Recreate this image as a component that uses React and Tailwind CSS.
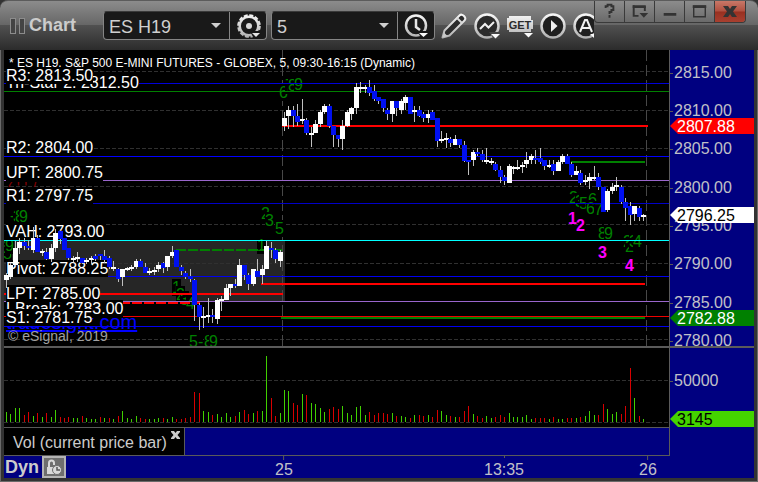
import { useState } from "react";

const PLOT_WIDTH = 665;
const FIRST_BAR = 280;
const BAR_STEP = 4.49;
const OLDEST = -62;

// high, body top, body bottom, low, 1 = up bar (oldest first)
const candles = [
    [223, 225, 230, 238, 1], [213, 215, 227, 229, 1], [191, 198, 215, 217, 1], [188, 192, 198, 204, 1], [188, 192, 196, 200, 0],
    [190, 196, 198, 200, 0], [177, 188, 200, 203, 1], [185, 188, 202, 202, 0], [199, 201, 203, 206, 1], [198, 202, 209, 210, 0],
    [194, 198, 209, 212, 1], [179, 183, 198, 202, 1], [179, 181, 189, 194, 0], [188, 188, 200, 200, 0], [198, 198, 208, 210, 0],
    [206, 208, 210, 212, 1], [202, 207, 209, 212, 1], [208, 208, 213, 214, 0], [208, 210, 212, 214, 1], [206, 208, 210, 214, 1],
    [204, 206, 209, 211, 0], [204, 204, 206, 210, 0], [200, 206, 210, 213, 0], [206, 208, 217, 219, 0], [211, 217, 219, 221, 1],
    [218, 219, 229, 232, 0], [219, 219, 227, 236, 1], [217, 218, 220, 221, 1], [215, 217, 219, 221, 1], [209, 211, 217, 219, 1],
    [209, 211, 217, 217, 0], [213, 217, 223, 223, 0], [218, 221, 223, 225, 1], [217, 220, 222, 225, 1], [212, 215, 219, 222, 1],
    [212, 213, 218, 223, 0], [206, 206, 217, 221, 1], [196, 202, 206, 208, 1], [200, 200, 217, 217, 0], [215, 217, 221, 225, 0],
    [221, 223, 227, 229, 0], [219, 226, 229, 232, 0], [229, 230, 255, 271, 0], [253, 255, 267, 280, 0], [257, 266, 268, 278, 1],
    [248, 265, 267, 273, 1], [259, 265, 267, 273, 0], [248, 250, 269, 274, 1], [246, 249, 251, 261, 1], [234, 238, 250, 250, 1],
    [234, 234, 238, 246, 1], [229, 234, 236, 238, 0], [209, 215, 236, 236, 1], [215, 215, 225, 230, 0], [223, 225, 234, 240, 0],
    [219, 219, 234, 236, 1], [209, 221, 227, 227, 0], [215, 219, 225, 234, 1], [191, 196, 219, 219, 1], [192, 198, 200, 208, 0],
    [198, 200, 209, 213, 0], [200, 202, 211, 217, 1],
    [62, 68, 76, 81, 1], [56, 60, 66, 79, 1], [56, 60, 66, 77, 0], [54, 66, 72, 76, 0], [49, 69, 71, 74, 1],
    [68, 70, 83, 85, 0], [77, 83, 85, 97, 1], [70, 74, 83, 83, 1], [60, 62, 74, 77, 1], [54, 56, 62, 64, 1],
    [54, 56, 76, 78, 0], [76, 76, 85, 97, 0], [85, 85, 89, 97, 0], [70, 76, 89, 100, 1], [60, 62, 76, 77, 1],
    [57, 58, 64, 70, 1], [33, 37, 58, 64, 1], [32, 37, 39, 43, 1], [35, 37, 39, 43, 1], [30, 37, 43, 46, 0],
    [35, 41, 49, 51, 0], [47, 47, 51, 54, 0], [49, 49, 58, 62, 0], [58, 60, 64, 70, 0], [51, 51, 64, 72, 1],
    [51, 51, 58, 66, 0], [49, 51, 60, 64, 1], [45, 47, 53, 60, 1], [47, 47, 64, 64, 0], [56, 60, 62, 72, 1],
    [56, 60, 66, 67, 0], [62, 64, 68, 72, 0], [60, 64, 68, 73, 1], [60, 62, 70, 70, 0], [68, 68, 91, 97, 0],
    [81, 89, 91, 93, 1], [83, 88, 90, 98, 1], [87, 89, 93, 97, 0], [85, 89, 95, 95, 1], [89, 89, 95, 98, 0],
    [91, 95, 111, 112, 0], [110, 110, 112, 125, 0], [100, 102, 110, 116, 1], [98, 102, 104, 106, 0], [100, 104, 110, 112, 0],
    [98, 110, 112, 114, 1], [108, 111, 113, 115, 1], [112, 114, 120, 121, 0], [116, 120, 127, 133, 0], [125, 127, 131, 135, 0],
    [114, 116, 133, 133, 1], [116, 117, 119, 124, 1], [110, 117, 119, 120, 1], [112, 115, 117, 123, 1], [102, 110, 114, 118, 1],
    [104, 106, 110, 114, 1], [100, 108, 110, 114, 0], [98, 108, 112, 114, 0], [110, 110, 116, 120, 0], [110, 115, 117, 118, 1],
    [110, 114, 121, 125, 0], [110, 112, 121, 121, 1], [104, 106, 112, 114, 1], [104, 106, 114, 114, 0], [112, 114, 125, 127, 0],
    [116, 121, 125, 125, 1], [120, 123, 133, 135, 0], [125, 130, 132, 135, 1], [123, 127, 131, 139, 1], [116, 127, 129, 130, 1],
    [123, 127, 137, 140, 0], [137, 137, 162, 162, 0], [139, 141, 160, 162, 1], [133, 137, 141, 144, 1], [127, 135, 137, 141, 1],
    [135, 137, 152, 154, 0], [148, 152, 158, 171, 0], [152, 156, 165, 175, 0], [156, 156, 164, 171, 1], [156, 158, 167, 171, 0],
    [164, 165, 167, 171, 1],
];

// bar heights, negative = down bar
const volumes = [
    10, 8, 14, 14, -7, -10, 6, -9, 5, -9, 5, 12, -5, -4, -5, 4, 4, -6, 4, 3, 3, -5, 4, -4, 3, -6, 11, 4, 3, 6, -4,
    -3, 3, 3, 4, -4, 3, 5, -3, -3, -4, -5, -30, -29, 11, 10, -7, 8, 5, 9, 5, -6, 10, -12, -8, 9, -11, 11, 66, -24, -6, 9,
    32, 31, -19, -17, 28, -27, 19, 18, 14, 10, -13, -15, -13, 16, 9, 7, 15, 16, 7, -10, -7, -9, -9, -8, 9, -6, 6, 5, -4,
    7, -7, -6, 7, -5, -12, 11, 7, -6, 5, -5, -11, -16, 8, -6, -4, 6, 4, -5, -7, -5, 9, 5, 5, 5, 7, 3, -4, -4, -4, 3, -5,
    3, 3, -4, -4, 4, -5, 6, 11, 7, -7, -18, 13, 8, 10, -8, -16, -54, 24, -6, 3,
];

const gridRows = [21, 60, 98, 136, 174, 213, 251, 289];

// y, colour
const levels = [
    [33, "#0000d8"], [41, "#008000"], [106, "#0000ff"], [130, "#9a66cc"], [153, "#0000c8"], [190, "#00ffff"],
    [226, "#0000f0"], [251, "#9a66cc"], [266, "#f00000"], [276, "#0000f0"],
];

// x1, x2, y, colour, dash
const segments = [
    [0, 279, 243, "#ff0000"], [8, 196, 252, "#ff0000", "10 2"], [172, 278, 199, "#008000", "10 2"],
    [257, 641, 233, "#ff0000"], [277, 641, 267, "#008000"], [278, 644, 75, "#ff0000"], [567, 641, 111, "#008000"],
];

// name, top; later ones cover earlier ones
const levelLabels = [
    ["Tri-Star 2: 2812.50", 24], ["R3: 2813.50", 17], ["R2: 2804.00", 89], ["UPT: 2800.75", 114], ["R1: 2797.75", 137],
    ["VAH: 2793.00", 173], ["Pivot: 2788.25", 210], ["LBreak: 2783.00", 250], ["LPT: 2785.00", 235], ["S1: 2781.75", 259],
];

// digit, x, top
const counts = [
    ["-", 6, 157], ["3", 9, 158], ["8", 11, 158], ["9", 15, 158], ["8", -1, 195], ["6", -3, 189], ["9", 1, 187],
    ["1", 168, 229], ["2", 172, 236], ["3", 176, 241], ["4", 182, 245], ["1", 253, 187],
    ["2", 257, 155], ["3", 261, 162], ["5", 271, 170],
    ["5", 185, 283], ["-", 194, 283], ["8", 200, 283], ["9", 205, 283],
    ["6", 275, 34], ["7", 281, 27], ["8", 284, 27], ["9", 290, 26],
    ["2", 565, 139], ["3", 571, 143], ["5", 575, 145], ["6", 584, 141], ["6", 582, 150], ["7", 590, 151],
    ["8", 594, 175], ["9", 600, 175], ["2", 619, 183], ["2", 621, 188], ["3", 625, 183], ["4", 629, 183],
];

const signals = [["1", 564, 160], ["2", 572, 167], ["3", 594, 194], ["4", 621, 207]];

const axisPrices = [
    ["2815.00", 22], ["2810.00", 60], ["2805.00", 98], ["2800.00", 137], ["2795.00", 175],
    ["2790.00", 213], ["2785.00", 252], ["2780.00", 290],
];

const barX = (i) => Math.round(FIRST_BAR + (i + OLDEST) * BAR_STEP);
const pct = (x) => `${(x / PLOT_WIDTH) * 100}%`;

function Icon({ children, size = 26 }) {
    return (
        <svg width={size} height={size} viewBox="0 0 26 26" fill="none" aria-hidden="true" className="shrink-0">
            <defs>
                <linearGradient id="metal" x1="0" y1="0" x2="0" y2="26" gradientUnits="userSpaceOnUse">
                    <stop offset="0" stopColor="#fafafa" />
                    <stop offset="1" stopColor="#adadad" />
                </linearGradient>
            </defs>
            {children}
        </svg>
    );
}

function ToolButton({ label, children }) {
    return (
        <button type="button" aria-label={label} className="w-[26px] shrink-0">
            <Icon>{children}</Icon>
        </button>
    );
}

function Combo({ label, value, options, onChange, children }) {
    return (
        <div className="flex h-[29px] shrink-0 rounded border border-[#858585] border-t-[#3a3a3a] bg-[#191919]">
            <div className="relative w-[126px] border-r border-[#858585]">
                <select
                    aria-label={label}
                    value={value}
                    onChange={(e) => onChange(e.target.value)}
                    className="h-full w-full appearance-none bg-transparent pt-0.5 pl-[5px] text-[18px] text-[#cfcfcf] outline-none"
                >
                    {options.map((o) => <option key={o}>{o}</option>)}
                </select>
                <svg width="10" height="5" className="pointer-events-none absolute top-[11px] right-2" aria-hidden="true">
                    <path d="M0 0h10L5 5z" fill="#cfcfcf" />
                </svg>
            </div>
            <button type="button" aria-label={`${label} settings`} className="flex w-[36px] items-center justify-center">
                <Icon>{children}</Icon>
            </button>
        </div>
    );
}

function TitleBar() {
    const [symbol, setSymbol] = useState("ES H19");
    const [interval, setInterval] = useState("5");

    return (
        <header className="flex h-[50px] rounded-t-lg border-t border-[#5c5c5c] bg-[linear-gradient(#8c8c8c_0%,#666666_49%,#505050_50%,#2b2b2b_100%)]">
            <div className="flex min-w-0 flex-1 items-center overflow-hidden pl-2.5">
                {/* Drag grip */}
                <div className="flex shrink-0 gap-[3px]">
                    <span className="h-4 w-1.5 border border-[#8c8c8c] bg-[#444444]" />
                    <span className="h-4 w-1.5 border border-[#8c8c8c] bg-[#444444]" />
                </div>
                <h1 className="w-[78px] shrink-0 pl-1 text-[18px] font-bold text-[#cccccc]">Chart</h1>

                <div className="flex shrink-0 gap-1">
                    <Combo label="Symbol" value={symbol} options={["ES H19", "NQ H19"]} onChange={setSymbol}>
                        <circle cx="14" cy="13" r="9.300" stroke="url(#metal)" strokeWidth="2.500" />
                        <circle cx="14" cy="13" r="10.800" stroke="url(#metal)" strokeWidth="2" strokeDasharray="4 1.650" />
                        <circle cx="14" cy="13" r="3" fill="#d8d8d8" />
                        <path d="M15 18h11v2l-5 6h-2z" fill="#191919" />
                        <path d="M17 20h8l-4 4z" fill="#e6e6e6" />
                    </Combo>
                    <Combo label="Interval" value={interval} options={["5", "15", "60"]} onChange={setInterval}>
                        <circle cx="13" cy="12.500" r="10" stroke="url(#metal)" strokeWidth="2.500" />
                        <path d="M13 6v8l4 3" stroke="#e6e6e6" strokeWidth="2.500" />
                        <path d="M14 18h12v2l-5 6h-2z" fill="#191919" />
                        <path d="M16 20h9l-4.500 4z" fill="#fafafa" />
                    </Combo>
                </div>

                <div className="flex shrink-0 gap-[7px] pl-1.5">
                    <ToolButton label="Draw">
                        <path d="M1.500 24.500l2-7L18.500 2.500q2-2 4.500 .5t.5 4.500L8.500 22.500z" fill="#2b2b2b" stroke="url(#metal)" strokeWidth="2" strokeLinejoin="round" />
                        <path d="M16 5l5 5" stroke="#d8d8d8" strokeWidth="2" />
                        <path d="M1.500 24.500l1.500-5 3.500 3.500z" fill="#c8c8c8" />
                    </ToolButton>
                    <ToolButton label="Studies">
                        <circle cx="13" cy="13" r="11.500" fill="#2b2b2b" stroke="url(#metal)" strokeWidth="2.500" />
                        <path d="M6 16l5-5 3.500 3.500L20 9" stroke="#f0f0f0" strokeWidth="2" />
                        <path d="M15 19h11v7h-6z" fill="#444444" />
                        <path d="M17 21h9l-4.500 4.500z" fill="#fafafa" />
                    </ToolButton>
                    <ToolButton label="Advanced GET">
                        <path d="M2 3h22v4h2v9h-2v3H2v-2H0V5h2z" fill="url(#metal)" />
                        <text x="13" y="16" textAnchor="middle" fontSize="11" fontWeight="bold" fill="#2b2b2b">GET</text>
                        <path d="M17 20h9l-4.500 4.500z" fill="#fafafa" />
                    </ToolButton>
                    <ToolButton label="Playback">
                        <circle cx="13" cy="13" r="11.500" fill="#1f1f1f" stroke="url(#metal)" strokeWidth="2.500" />
                        <path d="M11 7l6.500 6L11 19z" fill="#f0f0f0" />
                    </ToolButton>
                    <ToolButton label="Alerts">
                        <circle cx="13" cy="13" r="11.500" fill="#1f1f1f" stroke="url(#metal)" strokeWidth="2.500" />
                        <path d="M7 19l5-12h2l5 12M9 15h8" stroke="#f0f0f0" strokeWidth="2" />
                        <path d="M17 21h9l-4.500 4.500z" fill="#fafafa" />
                    </ToolButton>
                </div>
            </div>

            {/* Window controls */}
            <div className="mr-3 flex h-[22px] shrink-0 divide-x divide-[#3a3a3a] overflow-hidden rounded-b border border-t-0 border-[#3a3a3a] bg-[linear-gradient(#8c8c8c,#6a6a6a)]">
                <WindowButton label="Help">
                    <path d="M11 7V5h2V3.500h4V5h2v4h-2v2h-2v2M15 14v3" stroke="#333333" strokeWidth="2" />
                </WindowButton>
                <WindowButton label="Window options">
                    <path d="M20.500 5v5M9 4v12M8 15h6" stroke="#333333" strokeWidth="2" />
                    <path d="M8 4h13.500v3H8z" fill="#333333" />
                    <path d="M15 12h9l-4.500 5z" fill="#333333" />
                </WindowButton>
                <WindowButton label="Minimize">
                    <path d="M9 12h13v3H9z" fill="#333333" />
                </WindowButton>
                <WindowButton label="Maximize">
                    <path d="M9 5h12v11H9z" stroke="#333333" strokeWidth="1.500" />
                    <path d="M8 4h14v3H8z" fill="#333333" />
                </WindowButton>
                <button type="button" aria-label="Close" className="w-[30px] bg-[linear-gradient(#c87868_0%,#b05040_48%,#983020_52%,#a84030_100%)]">
                    <svg width="30" height="21" viewBox="0 0 30 21" aria-hidden="true">
                        <path d="M8 5h5l2 3 2-3h5l-4 5.500L22 16h-5l-2-3-2 3H8l4-5.500z" fill="#333333" />
                    </svg>
                </button>
            </div>
        </header>
    );
}

function WindowButton({ label, children }) {
    return (
        <button type="button" aria-label={label} className="w-[30px]">
            <svg width="29" height="21" viewBox="0 0 30 21" fill="none" aria-hidden="true">{children}</svg>
        </button>
    );
}

function PricePlot() {
    return (
        <div className="relative min-w-0 flex-1 overflow-hidden border-r border-[#5a5a5a] bg-black">
            {/* Grid, value area and levels */}
            <svg viewBox="0 0 665 296" preserveAspectRatio="none" className="absolute inset-0 h-full w-full" shapeRendering="crispEdges" aria-hidden="true">
                <rect x="0" y="191" width="281" height="60" fill="#262626" />
                {gridRows.map((y) => (
                    <path key={y} d={`M0 ${y + 0.5}H665`} stroke="#303030" strokeDasharray="4 2" />
                ))}
                <path d="M278.500 0V296M642.500 0V296" stroke="#484848" strokeDasharray="11 4" />
            </svg>

            {counts.map(([digit, x, top], i) => (
                <span key={i} className="absolute bg-black leading-[17px] text-[#008000]" style={{ left: pct(x), top }}>
                    {digit}
                </span>
            ))}
            <span className="absolute top-[130px] left-[3px] leading-[17px] whitespace-pre text-[#800000]">{"( ' ' /"}</span>

            <svg viewBox="0 0 665 296" preserveAspectRatio="none" className="absolute inset-0 h-full w-full" shapeRendering="crispEdges" aria-hidden="true">
                {levels.map(([y, color]) => (
                    <rect key={y} x="0" y={y} width="665" height="1" fill={color} />
                ))}
                {segments.map(([x1, x2, y, color, dash]) => (
                    <path key={y} d={`M${x1} ${y + 1}H${x2}`} stroke={color} strokeWidth="2" strokeDasharray={dash} />
                ))}
            </svg>

            <a href="#tradesight" className="absolute top-[261px] left-0.5 text-[20px] leading-[22px] text-[#0000ff] underline">tradesight.com</a>
            <span className="absolute top-[278px] left-1 text-[14px] leading-4 text-[#a0a0a0]">© eSignal, 2019</span>
            <h2 className="absolute top-[5px] left-[5px] text-[12px] leading-4 whitespace-nowrap text-white">
                * ES H19, S&amp;P 500 E-MINI FUTURES - GLOBEX, 5, 09:30-16:15 (Dynamic)
            </h2>
            {levelLabels.map(([text, top]) => (
                <span key={text} className="absolute left-0.5 bg-black leading-[17px] whitespace-nowrap text-white" style={{ top }}>
                    {text}
                </span>
            ))}

            {/* Candles */}
            <svg viewBox="0 0 665 296" preserveAspectRatio="none" className="absolute inset-0 h-full w-full" shapeRendering="crispEdges" role="img" aria-label="ES H19 five minute candles">
                {candles.map(([high, top, bottom, low, up], i) => (
                    <g key={i}>
                        <rect x={barX(i)} y={high} width="1" height={low - high} fill="#c0c0c0" />
                        <rect x={barX(i) - 2} y={top} width="5" height={bottom - top} fill={up ? "#ffffff" : "#0010f0"} />
                    </g>
                ))}
            </svg>

            {signals.map(([digit, x, top]) => (
                <span key={digit} className="absolute leading-[18px] font-bold text-[#ff00ff]" style={{ left: pct(x), top }}>
                    {digit}
                </span>
            ))}
        </div>
    );
}

function AxisTag({ text, top, className }) {
    return (
        <div
            className={`absolute right-0 left-0 h-4 pl-[7px] leading-[18px] [clip-path:polygon(0_50%,8px_0,100%_0,100%_100%,8px_100%)] ${className}`}
            style={{ top }}
        >
            {text}
        </div>
    );
}

function AxisLabel({ text, y }) {
    return (
        <div className="absolute left-0 flex h-[18px] items-center gap-px leading-[18px] text-[#c0c0c8]" style={{ top: y - 8 }}>
            <span className="h-px w-[3px] bg-[#5a5a5a]" />
            {text}
        </div>
    );
}

function VolumePlot() {
    return (
        <svg viewBox="0 0 665 79" preserveAspectRatio="none" className="block h-[79px] w-full bg-black" shapeRendering="crispEdges" role="img" aria-label="Volume">
            <path d="M0 32.500H665M0 74.500H665" stroke="#303030" strokeDasharray="4 2" />
            {volumes.map((v, i) => (
                <rect key={i} x={barX(i)} y={74 - Math.abs(v)} width="1" height={Math.abs(v)} fill={v > 0 ? "#40d000" : "#d80000"} />
            ))}
        </svg>
    );
}

function TimeLabel({ text, x, tall }) {
    return (
        <div className="absolute top-0 flex -translate-x-1/2 flex-col items-center text-[#c0c0c8]" style={{ left: pct(x) }}>
            <span className={`w-px bg-[#5a5a5a] ${tall ? "mb-px h-1" : "mb-[3px] h-0.5"}`} />
            <span className="leading-[18px]">{text}</span>
        </div>
    );
}

export default function App() {
    return (
        <div className="bg-[#333333] font-['Liberation_Sans',Arial,sans-serif] text-[16px]">
            <TitleBar />
            <main className="border-x border-b border-[#6a6a6a] px-[3px] pb-[3px]">
                {/* Price pane */}
                <section className="flex h-[296px]">
                    <PricePlot />
                    <div className="relative w-[84px] shrink-0 overflow-hidden bg-[#000080]">
                        {axisPrices.map(([text, y]) => <AxisLabel key={text} text={text} y={y} />)}
                        <AxisTag text="2807.88" top={68} className="bg-[#ff0000] text-white" />
                        <AxisTag text="2796.25" top={157} className="bg-white text-black" />
                        <AxisTag text="2782.88" top={260} className="bg-[#008000] text-white" />
                    </div>
                </section>

                {/* Volume pane */}
                <section className="flex border-t-2 border-[#5a5a5a]">
                    <div className="min-w-0 flex-1 border-r border-b border-[#5a5a5a] bg-[#000080]">
                        <VolumePlot />
                        <div className="flex h-7 border-t border-[#5a5a5a]">
                            <div className="flex w-[181px] justify-between border-r border-[#5a5a5a] bg-black pr-1 pl-[9px] text-[#cccccc]">
                                <span className="pt-1.5 leading-[18px] whitespace-nowrap">Vol (current price bar)</span>
                                <button type="button" aria-label="Remove study" className="mt-[3px] h-2">
                                    <svg width="9" height="8" viewBox="0 0 9 8" aria-hidden="true">
                                        <path d="M0 0h3l1.500 2L6 0h3v1L6.500 4 9 7v1H6L4.500 6 3 8H0V7l2.500-3L0 1z" fill="#cccccc" />
                                    </svg>
                                </button>
                            </div>
                        </div>
                    </div>
                    <div className="relative w-[84px] shrink-0 bg-[#000080]">
                        <AxisLabel text="50000" y={32} />
                        <AxisTag text="3145" top={63} className="bg-[#44d400] text-black" />
                    </div>
                </section>

                {/* Time axis */}
                <footer className="flex h-[22px] bg-[#000080] pr-[85px]">
                    <div className="relative flex flex-1 items-start">
                        <span className="pl-px text-[18px] leading-[22px] font-bold text-[#cccccc]">Dyn</span>
                        <button type="button" aria-label="Time template lock" className="ml-[3px] flex h-[22px] w-6 items-center justify-center border-2 border-[#b4b4b4] bg-[#6e6e6e]">
                            <svg width="18" height="17" viewBox="0 0 18 17" fill="none" aria-hidden="true">
                                <path d="M4 8V4q0-2.500 2.500-2.500T9 4v2" stroke="#d8d8d8" strokeWidth="2" />
                                <path d="M2 8h7v7H2z" fill="#d8d8d8" />
                                <circle cx="12" cy="11" r="4.500" fill="#d8d8d8" stroke="#6e6e6e" />
                                <path d="M12 8v3h3" stroke="#555555" strokeWidth="1.500" />
                            </svg>
                        </button>
                        <TimeLabel text="25" x={280} tall />
                        <TimeLabel text="13:35" x={500} />
                        <TimeLabel text="26" x={644} tall />
                    </div>
                </footer>
            </main>
        </div>
    );
}
